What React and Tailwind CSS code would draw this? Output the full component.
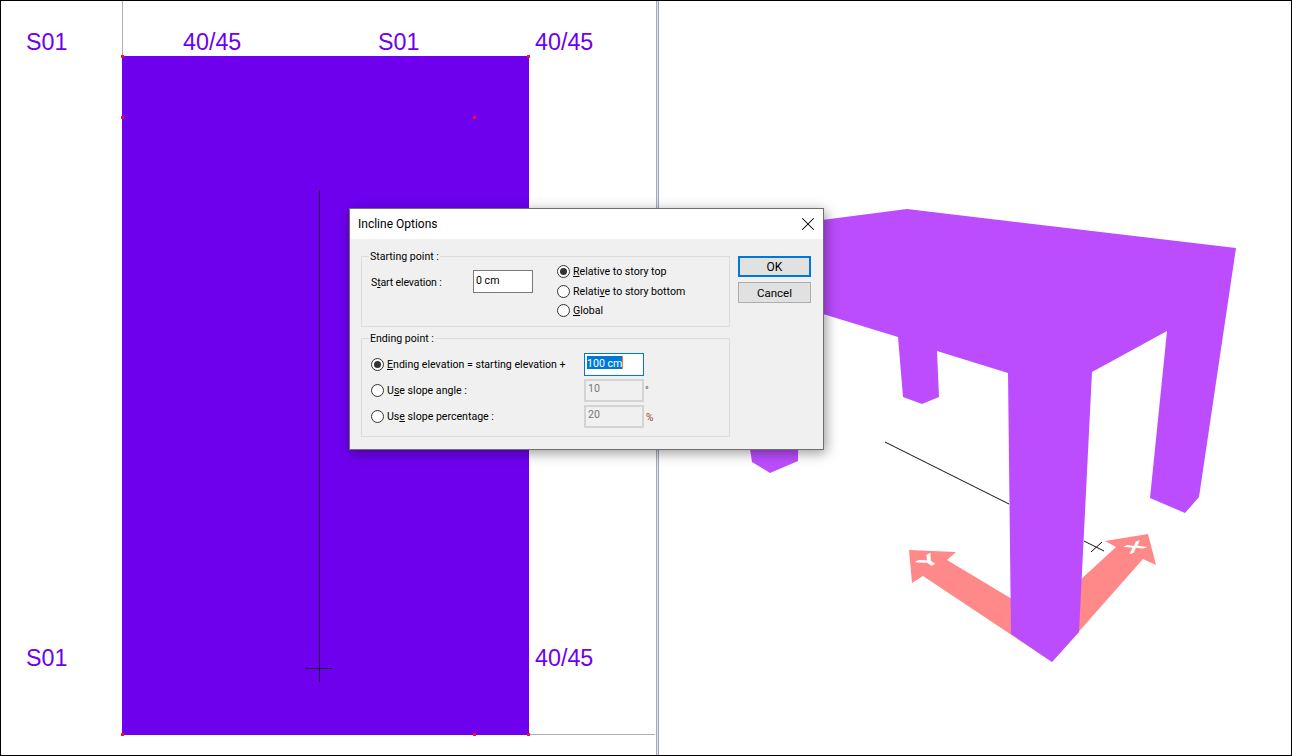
import React from 'react';
import { X } from 'lucide-react';

const FONT = "font-['Roboto',sans-serif]";

// labels + snap points sit at their place on the drawing canvas
const LABELS = [
  { text: 'S01', cls: 'left-[26px] top-[28px]' },
  { text: '40/45', cls: 'left-[183px] top-[28px]' },
  { text: 'S01', cls: 'left-[378px] top-[28px]' },
  { text: '40/45', cls: 'left-[535px] top-[28px]' },
  { text: 'S01', cls: 'left-[26px] top-[644px]' },
  { text: '40/45', cls: 'left-[535px] top-[644px]' },
];

const POINTS = [
  'left-[121px] top-[55px]',
  'left-[121px] top-[116px]',
  'left-[473px] top-[116px]',
  'left-[527px] top-[55px]',
  'left-[473px] top-[733px]',
  'left-[527px] top-[733px]',
  'left-[121px] top-[733px]',
];

function Radio({ checked }) {
  return (
    <span className="flex h-[13px] w-[13px] shrink-0 items-center justify-center rounded-full border border-[#333] bg-white">
      {checked && <span className="h-[7px] w-[7px] rounded-full bg-[#333]" />}
    </span>
  );
}

function Group({ title, className, children }) {
  return (
    <div className={`relative border border-[#dcdcdc] ${className}`}>
      <span className="absolute left-[7px] top-[-8px] bg-[#f0f0f0] px-px leading-[16px]">{title}</span>
      {children}
    </div>
  );
}

function Field({ value }) {
  return (
    <div className="h-[23px] w-[60px] shrink-0 border-2 border-[#d4d4d4] bg-[#f0f0f0] pl-[2px] leading-[16px] text-[#777]">
      {value}
    </div>
  );
}

function Dialog() {
  return (
    <div className={`absolute left-[349px] top-[208px] flex h-[242px] w-[475px] flex-col border border-[#6e6e6e] bg-[#f0f0f0] text-[10.6px] text-black shadow-[2px_3px_12px_rgba(0,0,0,0.4)] ${FONT}`}>
      <div className="flex h-[30px] shrink-0 items-center justify-between bg-white pl-[8px] pr-[4px]">
        <span className="text-[12px]">Incline Options</span>
        <X size={22} strokeWidth={1.1} />
      </div>
      <div className="flex pl-[11px] pt-[17px]">
        <div className="flex w-[369px] flex-col gap-[11px]">
          <Group title="Starting point :" className="flex h-[71px] pl-[9px]">
            <div className="mt-[13px] flex h-[23px] w-[102px] items-center">
              <span className="pt-[2px] tracking-[-0.15px]">S<u>t</u>art elevation :</span>
            </div>
            <div className="mt-[13px] h-[23px] w-[60px] border border-[#7a7a7a] bg-white pl-[2px] leading-[19px]">0 cm</div>
            <div className="ml-[24px] mt-[4px] flex flex-col">
              <div className="flex h-[20px] items-center gap-[3px]"><Radio checked /><span className="pt-[2px]"><u>R</u>elative to story top</span></div>
              <div className="flex h-[20px] items-center gap-[3px]"><Radio /><span className="pt-[2px]">Relati<u>v</u>e to story bottom</span></div>
              <div className="-mt-px flex h-[20px] items-center gap-[3px]"><Radio /><span className="pt-px"><u>G</u>lobal</span></div>
            </div>
          </Group>
          <Group title="Ending point :" className="flex h-[99px] flex-col gap-[3px] pl-[9px] pt-[14px]">
            <div className="flex h-[23px] items-center">
              <Radio checked />
              <span className="ml-[3px] w-[197px] whitespace-nowrap"><u>E</u>nding elevation = starting elevation +</span>
              <div className="h-[23px] w-[60px] border border-[#0078d7] bg-white pl-[2px] pt-[2px]">
                <span className="block h-[13px] w-[36px] whitespace-nowrap border-r border-[#f08020] bg-[#0078d7] leading-[15px] text-white">100 cm</span>
              </div>
            </div>
            <div className="flex h-[23px] items-center">
              <Radio />
              <span className="ml-[3px] w-[197px]">U<u>s</u>e slope angle :</span>
              <Field value="10" />
              <span className="ml-[1px] text-[10px] text-[#555]">°</span>
            </div>
            <div className="flex h-[23px] items-center">
              <Radio />
              <span className="ml-[3px] w-[197px]">Us<u>e</u> slope percentage :</span>
              <Field value="20" />
              <span className="ml-[2px] mt-[2px] text-[10px] text-[#8a4a2a]">%</span>
            </div>
          </Group>
        </div>
        <div className="ml-[8px] flex w-[73px] flex-col gap-[5px]">
          <button className="h-[21px] border-2 border-[#0078d7] bg-[#e1e1e1] pt-[2px] text-[12px] leading-[15px]">OK</button>
          <button className="h-[21px] border border-[#adadad] bg-[#e1e1e1] pt-[2px] text-[11.5px] leading-[17px]">Cancel</button>
        </div>
      </div>
    </div>
  );
}

function PlanPane() {
  return (
    <div className="relative h-full w-[655px] shrink-0 bg-white">
      {/* this layer is pulled back over the 1px frame so offsets read as page coords */}
      <div className="absolute -left-px -top-px h-[756px] w-[656px]">
        <div className="absolute left-[122px] top-[1px] h-[55px] w-px bg-[#b0b0b0]" />
        <div className="absolute left-[529px] top-[734px] h-px w-[126px] bg-[#b0b0b0]" />
        <div className="absolute left-[122px] top-[56px] h-[679px] w-[407px] bg-[#6e00ee]" />
        <div className="absolute left-[319px] top-[190px] h-[492px] w-px bg-[#1c0a40]" />
        <div className="absolute left-[305px] top-[668px] h-px w-[27px] bg-[#1c0a40]" />
        {POINTS.map((p) => (
          <span key={p} className={`absolute h-[3px] w-[3px] bg-[#f01030] ${p}`} />
        ))}
        {LABELS.map((l) => (
          <span key={l.cls} className={`absolute font-['Liberation_Sans',sans-serif] text-[23.3px] leading-[28px] text-[#6e00ee] ${l.cls}`}>
            {l.text}
          </span>
        ))}
      </div>
    </div>
  );
}

function ModelPane() {
  return (
    <div className="h-full flex-1 bg-white">
      <svg className="block h-full w-full" viewBox="659 1 632 754">
        <polyline points="885,442 1009,504" fill="none" stroke="#111" strokeWidth="1" />
        <polyline points="1084,541 1104,551" fill="none" stroke="#111" strokeWidth="1" />
        <polyline points="1091,552 1102,542" fill="none" stroke="#111" strokeWidth="1" />
        {/* axes */}
        <polygon fill="#ff8888" points="909,550 956,552 947,560 1012,599 1052,662 923,576 912,583" />
        <polygon fill="#ff8888" points="1105,541 1148,534 1156,565 1143,559 1052,662 1078,582 1116,547" />
        <text transform="matrix(1.23 -0.75 0.79 0.53 928 561)" dominantBaseline="central" fill="#fff" fontFamily="Liberation Sans, sans-serif" fontWeight="700" fontSize="20" textAnchor="middle">Y</text>
        <text transform="matrix(1.68 -0.7 0.61 0.65 1135 547)" dominantBaseline="central" fill="#fff" fontFamily="Liberation Sans, sans-serif" fontWeight="700" fontSize="16" textAnchor="middle">X</text>
        {/* frame */}
        <polygon fill="#bb4dff" points="745,280 750,449 752,462 770,473 798,461 800,300" />
        <polygon
          fill="#bb4dff"
          points="745,230 907,209 1236,248 1199,497 1185,513 1150,498 1167,331 1092,372 1079,632 1052,662 1011,634 1008,373 937,351 939,397 922,404 903,397 898,337 823,314 745,287"
        />
      </svg>
    </div>
  );
}

export default function App() {
  return (
    <div className="relative h-[756px] w-[1292px] overflow-hidden border border-black bg-white">
      <div className="flex h-full">
        <PlanPane />
        <div className="flex h-full w-[3px] shrink-0">
          <div className="w-px bg-[#a8acbc]" />
          <div className="w-px bg-[#dfe1ea]" />
          <div className="w-px bg-[#a0a4b8]" />
        </div>
        <ModelPane />
      </div>
      <div className="absolute -left-px -top-px">
        <Dialog />
      </div>
    </div>
  );
}
